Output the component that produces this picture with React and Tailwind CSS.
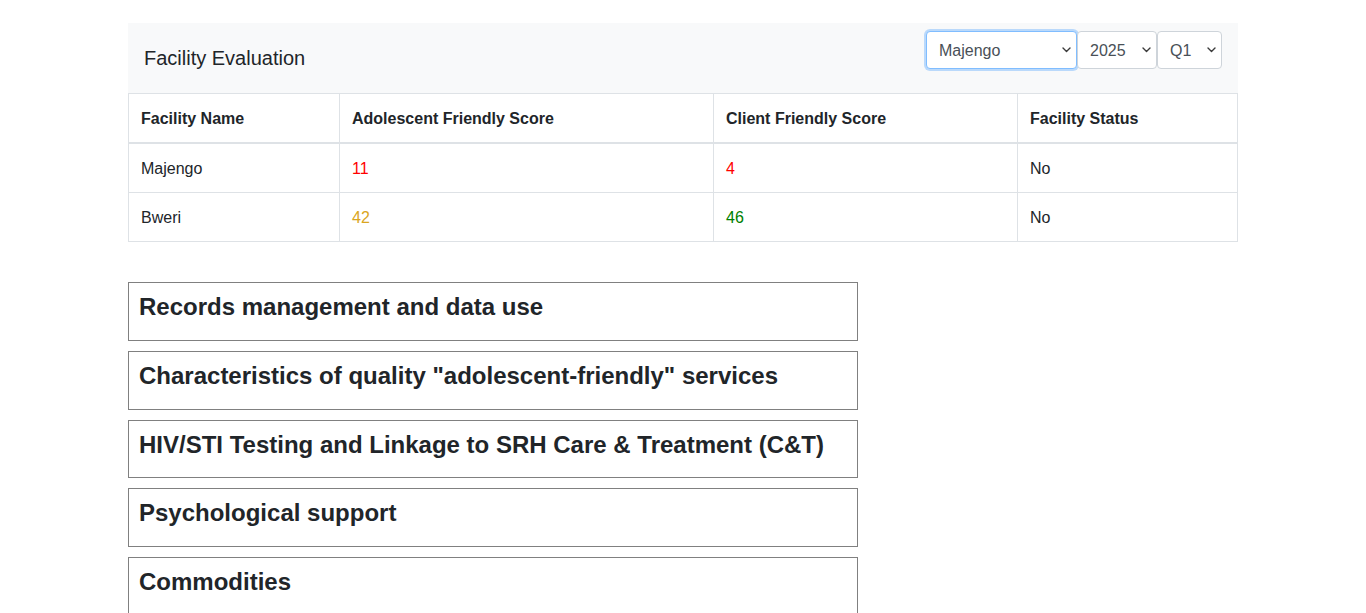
import React from "react";

function Chevron() {
  return (
    <svg width="9" height="6" viewBox="0 0 9 6" className="shrink-0">
      <path d="M1 1l3.5 3.5L8 1" fill="none" stroke="#3a3a3a" strokeWidth="1.4" strokeLinecap="round" strokeLinejoin="round" />
    </svg>
  );
}

function Select({ value, width, focused }) {
  return (
    <div
      className={`h-[38px] flex items-center justify-between pl-3 pr-[5px] bg-white rounded-[4px] border text-[16px] text-[#495057] ${width} ${
        focused ? "border-[#80bdff] shadow-[0_0_0_2px_rgba(0,123,255,0.25)]" : "border-[#ced4da]"
      }`}
    >
      <span className="pt-[2px]">{value}</span>
      <Chevron />
    </div>
  );
}

const rows = [
  { name: "Majengo", a: "11", aColor: "text-[#ff0000]", c: "4", cColor: "text-[#ff0000]", status: "No" },
  { name: "Bweri", a: "42", aColor: "text-[#daa520]", c: "46", cColor: "text-[#008000]", status: "No" },
];

const sections = [
  "Records management and data use",
  'Characteristics of quality "adolescent-friendly" services',
  "HIV/STI Testing and Linkage to SRH Care & Treatment (C&T)",
  "Psychological support",
  "Commodities",
];

const cell = "border border-[#dee2e6] px-3 pt-[13px] pb-[11px] leading-6";

export default function App() {
  return (
    <div className="min-h-screen bg-white text-[#212529] font-['Liberation_Sans',Arial,sans-serif] text-[16px]">
      <div className="w-[1110px] mx-auto pt-[23px]">
        <div className="bg-[#f8f9fa] h-[70px] flex items-center justify-between pl-4 pr-4">
          <h5 className="text-[20px] leading-[1.2] font-normal">Facility Evaluation</h5>
          <div className="flex self-start mt-2">
            <Select value="Majengo" width="w-[151px]" focused />
            <Select value="2025" width="w-[80px]" />
            <Select value="Q1" width="w-[65px]" />
          </div>
        </div>
        <table className="w-[1109px] border-collapse table-fixed">
          <colgroup>
            <col className="w-[211px]" />
            <col className="w-[374px]" />
            <col className="w-[304px]" />
            <col className="w-[220px]" />
          </colgroup>
          <thead>
            <tr>
              <th className={`${cell} border-b-2 text-left font-bold`}>Facility Name</th>
              <th className={`${cell} border-b-2 text-left font-bold`}>Adolescent Friendly Score</th>
              <th className={`${cell} border-b-2 text-left font-bold`}>Client Friendly Score</th>
              <th className={`${cell} border-b-2 text-left font-bold`}>Facility Status</th>
            </tr>
          </thead>
          <tbody>
            {rows.map((r) => (
              <tr key={r.name}>
                <td className={cell}>{r.name}</td>
                <td className={`${cell} ${r.aColor}`}>{r.a}</td>
                <td className={`${cell} ${r.cColor}`}>{r.c}</td>
                <td className={cell}>{r.status}</td>
              </tr>
            ))}
          </tbody>
        </table>
        <div className="mt-[40px] w-[730px] flex flex-col">
          {sections.map((s) => (
            <div key={s} className="border border-[#808080] p-[10px] mb-[10px]">
              <h4 className="text-[24px] leading-[1.2] font-bold mb-2">{s}</h4>
            </div>
          ))}
        </div>
      </div>
    </div>
  );
}
